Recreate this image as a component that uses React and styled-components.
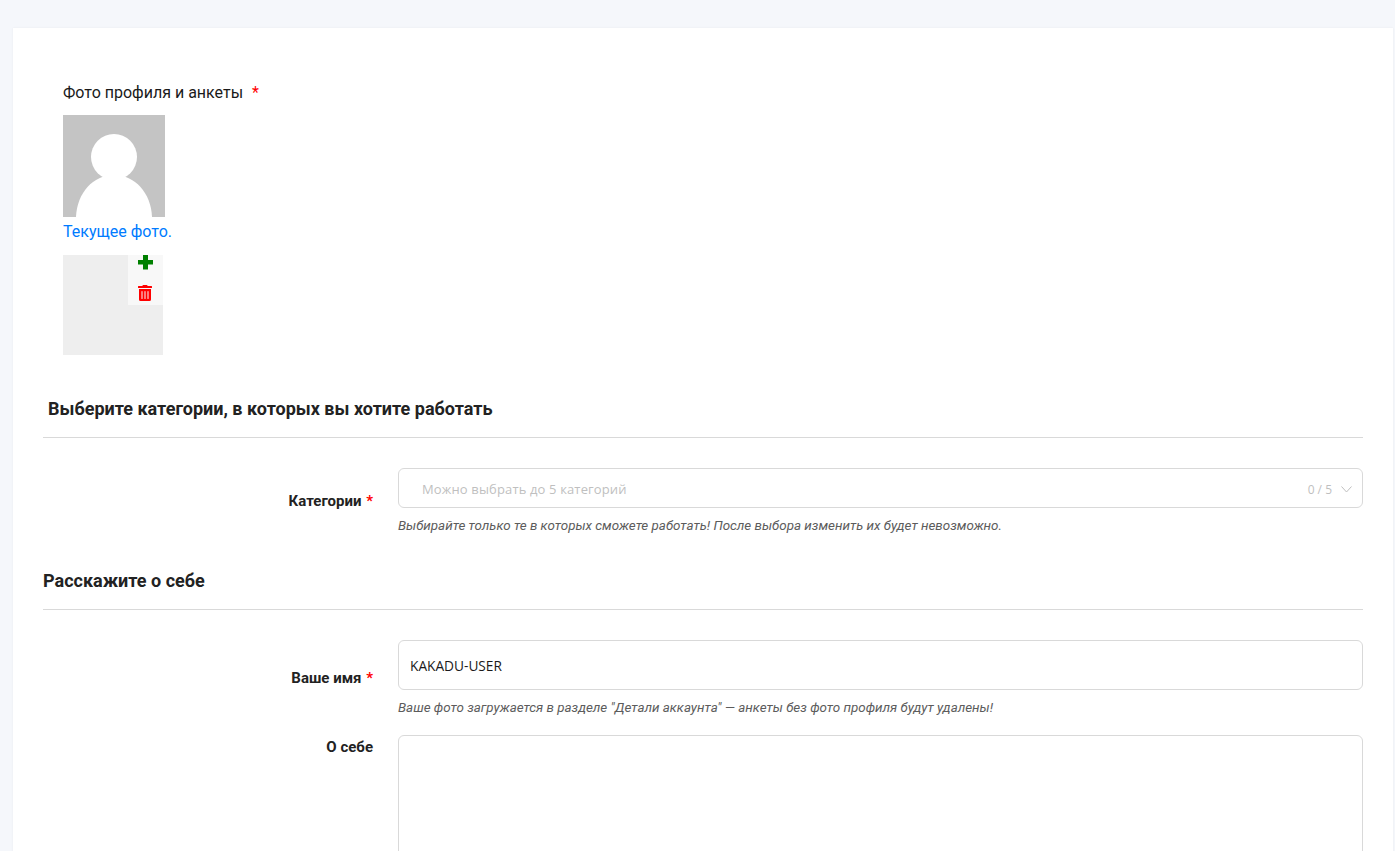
import React from 'react'
import styled, { createGlobalStyle } from 'styled-components'
import { FaTrashAlt } from 'react-icons/fa'

const GlobalStyle = createGlobalStyle`
    html, body {
        margin: 0;
        padding: 0;
        height: 100%;
        overflow: hidden;
        background: #f5f7fb;
        font-family: Roboto, sans-serif;
        color: #1a1a1a;
    }
`

const Page = styled.div`
    height: 851px;
    overflow: hidden;
    padding: 28px 2px 0 13px;
    box-sizing: border-box;
`

const Card = styled.div`
    background: #fff;
    padding: 55px 30px 0;
    min-height: 900px;
    box-shadow: 0 0 2px rgba(0, 0, 0, 0.06);
`

const PhotoBlock = styled.div`
    padding-left: 20px;
    margin-bottom: 43px;
`

const PhotoLabel = styled.div`
    font-size: 16px;
    line-height: 20px;
    color: #1a1a1a;
    margin-bottom: 12px;
`

const Star = styled.span`
    color: #f00;
    margin-left: ${(p) => p.$gap ?? 1}px;
`

const Avatar = styled.svg`
    display: block;
    width: 102px;
    height: 102px;
`

const PhotoLink = styled.a`
    display: block;
    font-size: 16px;
    line-height: 20px;
    margin: 5px 0 13px;
    color: #007bff;
`

const Upload = styled.div`
    position: relative;
    width: 100px;
    height: 100px;
    background: #eee;
`

const UploadActions = styled.div`
    position: absolute;
    top: 0;
    right: 0;
    width: 35px;
    height: 50px;
    box-sizing: border-box;
    padding-right: 1px;
    background: #f8f8f8;
    display: flex;
    flex-direction: column;
    align-items: center;
`

const ActionIcon = styled.span`
    display: flex;
    height: 15px;
    margin-bottom: ${(p) => p.$mb || 0}px;
    color: ${(p) => p.$color};
`

const PlusIcon = styled.svg`
    display: block;
    width: 15px;
    height: 15px;
    fill: currentColor;
`

const SectionTitle = styled.h3`
    margin: ${(p) => p.$mt || 0}px 0 0;
    padding: 0 0 17px ${(p) => p.$indent || 0}px;
    font-size: 18px;
    line-height: 22px;
    font-weight: 700;
    color: #222;
    border-bottom: 1px solid #d9d9d9;
`

const Row = styled.div`
    display: grid;
    grid-template-columns: 330px 1fr;
    column-gap: 25px;
    margin-top: ${(p) => p.$mt || 0}px;
`

const Label = styled.label`
    text-align: right;
    font-size: 15px;
    line-height: 20px;
    font-weight: 700;
    padding-top: ${(p) => p.$pt || 0}px;
    color: #222;
`

const Field = styled.div`
    min-width: 0;
`

const SelectBox = styled.div`
    display: flex;
    align-items: center;
    height: 40px;
    box-sizing: border-box;
    border: 1px solid #d9d9d9;
    border-radius: 6px;
    padding: 2px 10px 0 23px;
    background: #fff;
    font-family: "Open Sans", sans-serif;
    font-size: 13px;
`

const Placeholder = styled.span`
    flex: 1;
    color: #bfbfbf;
    letter-spacing: 0.14px;
`

const Counter = styled.span`
    color: #bfbfbf;
    font-size: 12px;
    margin-right: 9px;
`

const Chevron = styled.svg`
    width: 11px;
    height: 7px;
    fill: none;
    stroke: #bfbfbf;
    stroke-width: 1;
`

const Hint = styled.div`
    margin-top: 9px;
    font-size: 13.4px;
    line-height: 17px;
    font-style: italic;
    color: #5c5c5c;
`

const TextInput = styled.input`
    display: block;
    width: 100%;
    height: 50px;
    box-sizing: border-box;
    border: 1px solid #d9d9d9;
    border-radius: 6px;
    padding: 1px 11px 0;
    font-family: "Open Sans", sans-serif;
    font-size: 13.7px;
    color: #1a1a1a;
    outline: none;
`

const TextArea = styled.textarea`
    display: block;
    width: 100%;
    height: 200px;
    box-sizing: border-box;
    border: 1px solid #d9d9d9;
    border-radius: 6px;
    resize: none;
    outline: none;
`

const App = () => {
    return (
        <Page>
            <GlobalStyle />
            <Card>
                <PhotoBlock>
                    <PhotoLabel>Фото профиля и анкеты <Star $gap={5}>*</Star></PhotoLabel>
                    <Avatar viewBox="0 0 102 102">
                        <rect width="102" height="102" fill="#c4c4c4" />
                        <circle cx="51" cy="42" r="23" fill="#fff" />
                        <path d="M13 102C14 78 30 60 51 60C72 60 88 78 89 102Z" fill="#fff" />
                    </Avatar>
                    <PhotoLink>Текущее фото.</PhotoLink>
                    <Upload>
                        <UploadActions>
                            <ActionIcon $color="#008000" $mb={15}>
                                <PlusIcon viewBox="0 0 15 15">
                                    <path d="M5 0H10V5H15V9.5H10V14.5H5V9.5H0V5H5Z" />
                                </PlusIcon>
                            </ActionIcon>
                            <ActionIcon $color="#f00"><FaTrashAlt size={16} /></ActionIcon>
                        </UploadActions>
                    </Upload>
                </PhotoBlock>

                <SectionTitle $indent={5}>Выберите категории, в которых вы хотите работать</SectionTitle>
                <Row $mt={30}>
                    <Label $pt={23}>Категории <Star>*</Star></Label>
                    <Field>
                        <SelectBox>
                            <Placeholder>Можно выбрать до 5 категорий</Placeholder>
                            <Counter>0 / 5</Counter>
                            <Chevron viewBox="0 0 11 7"><path d="M0.5 0.5L5.5 6L10.5 0.5" /></Chevron>
                        </SelectBox>
                        <Hint>Выбирайте только те в которых сможете работать! После выбора изменить их будет невозможно.</Hint>
                    </Field>
                </Row>

                <SectionTitle $mt={36}>Расскажите о себе</SectionTitle>
                <Row $mt={30}>
                    <Label $pt={28}>Ваше имя <Star>*</Star></Label>
                    <Field>
                        <TextInput defaultValue="KAKADU-USER" />
                        <Hint>Ваше фото загружается в разделе "Детали аккаунта" — анкеты без фото профиля будут удалены!</Hint>
                    </Field>
                </Row>
                <Row $mt={19}>
                    <Label $pt={2}>О себе</Label>
                    <Field>
                        <TextArea />
                    </Field>
                </Row>
            </Card>
        </Page>
    )
}

export default App
